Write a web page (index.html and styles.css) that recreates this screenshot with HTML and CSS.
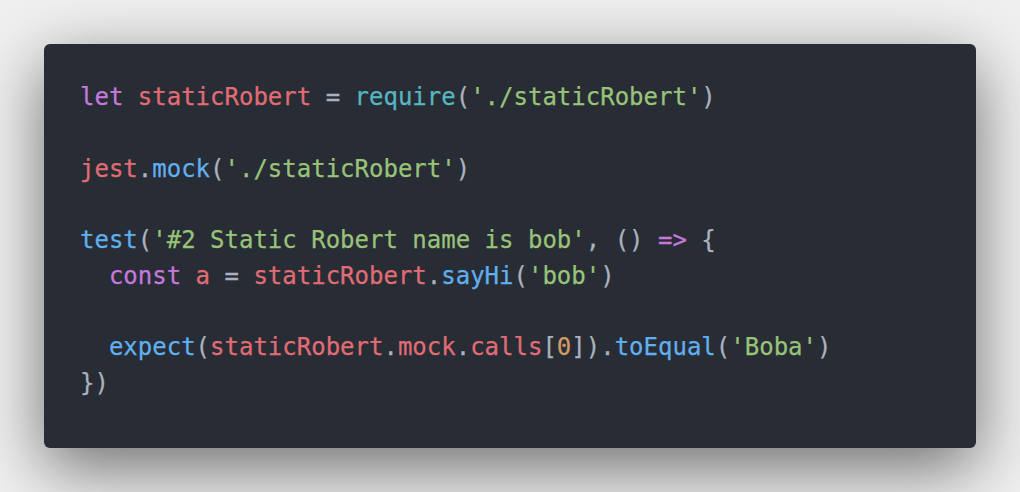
FILE: index.html
```html
<!DOCTYPE html>
<html>
<head>
<meta charset="utf-8">
<link rel="stylesheet" href="styles.css">
</head>
<body>
<div class="stage">
<div class="window">
<pre class="code"><span class="kw">let</span> <span class="var">staticRobert</span> <span class="op">=</span> <span class="fn">require</span><span class="p">(</span><span class="str">'./staticRobert'</span><span class="p">)</span>

<span class="var">jest</span><span class="p">.</span><span class="call">mock</span><span class="p">(</span><span class="str">'./staticRobert'</span><span class="p">)</span>

<span class="call">test</span><span class="p">(</span><span class="str">'#2 Static Robert name is bob'</span><span class="p">, () </span><span class="kw">=&gt;</span><span class="p"> {</span>
<span class="p">  </span><span class="kw">const</span> <span class="var">a</span> <span class="op">=</span> <span class="var">staticRobert</span><span class="p">.</span><span class="call">sayHi</span><span class="p">(</span><span class="str">'bob'</span><span class="p">)</span>

<span class="p">  </span><span class="call">expect</span><span class="p">(</span><span class="var">staticRobert</span><span class="p">.</span><span class="var">mock</span><span class="p">.</span><span class="var">calls</span><span class="p">[</span><span class="num">0</span><span class="p">]).</span><span class="call">toEqual</span><span class="p">(</span><span class="str">'Boba'</span><span class="p">)</span>
<span class="p">})</span></pre>
</div>
</div>
</body>
</html>
```

FILE: styles.css
```css
html, body {
  margin: 0;
  padding: 0;
  background: #f0f0f0;
}
.stage {
  width: 1020px;
  height: 492px;
  box-sizing: border-box;
  padding: 44px;
  overflow: hidden;
}
.window {
  width: 932px;
  height: 404px;
  box-sizing: border-box;
  background: #282c34;
  border-radius: 6px;
  box-shadow: 0 20px 68px rgba(0, 0, 0, 0.55);
  padding: 36px 36px 0 36px;
}
.code {
  margin: 0;
  font-family: "DejaVu Sans Mono", "Liberation Mono", monospace;
  font-size: 24px;
  line-height: 35.75px;
  color: #abb2bf;
  white-space: pre;
  -webkit-text-stroke: 0.25px currentColor;
}
.kw { color: #c678dd; }
.var { color: #e06c75; }
.op { color: #abb2bf; }
.fn { color: #56b6c2; }
.call { color: #61afef; }
.str { color: #98c379; }
.num { color: #d19a66; }
.p { color: #abb2bf; }
```
